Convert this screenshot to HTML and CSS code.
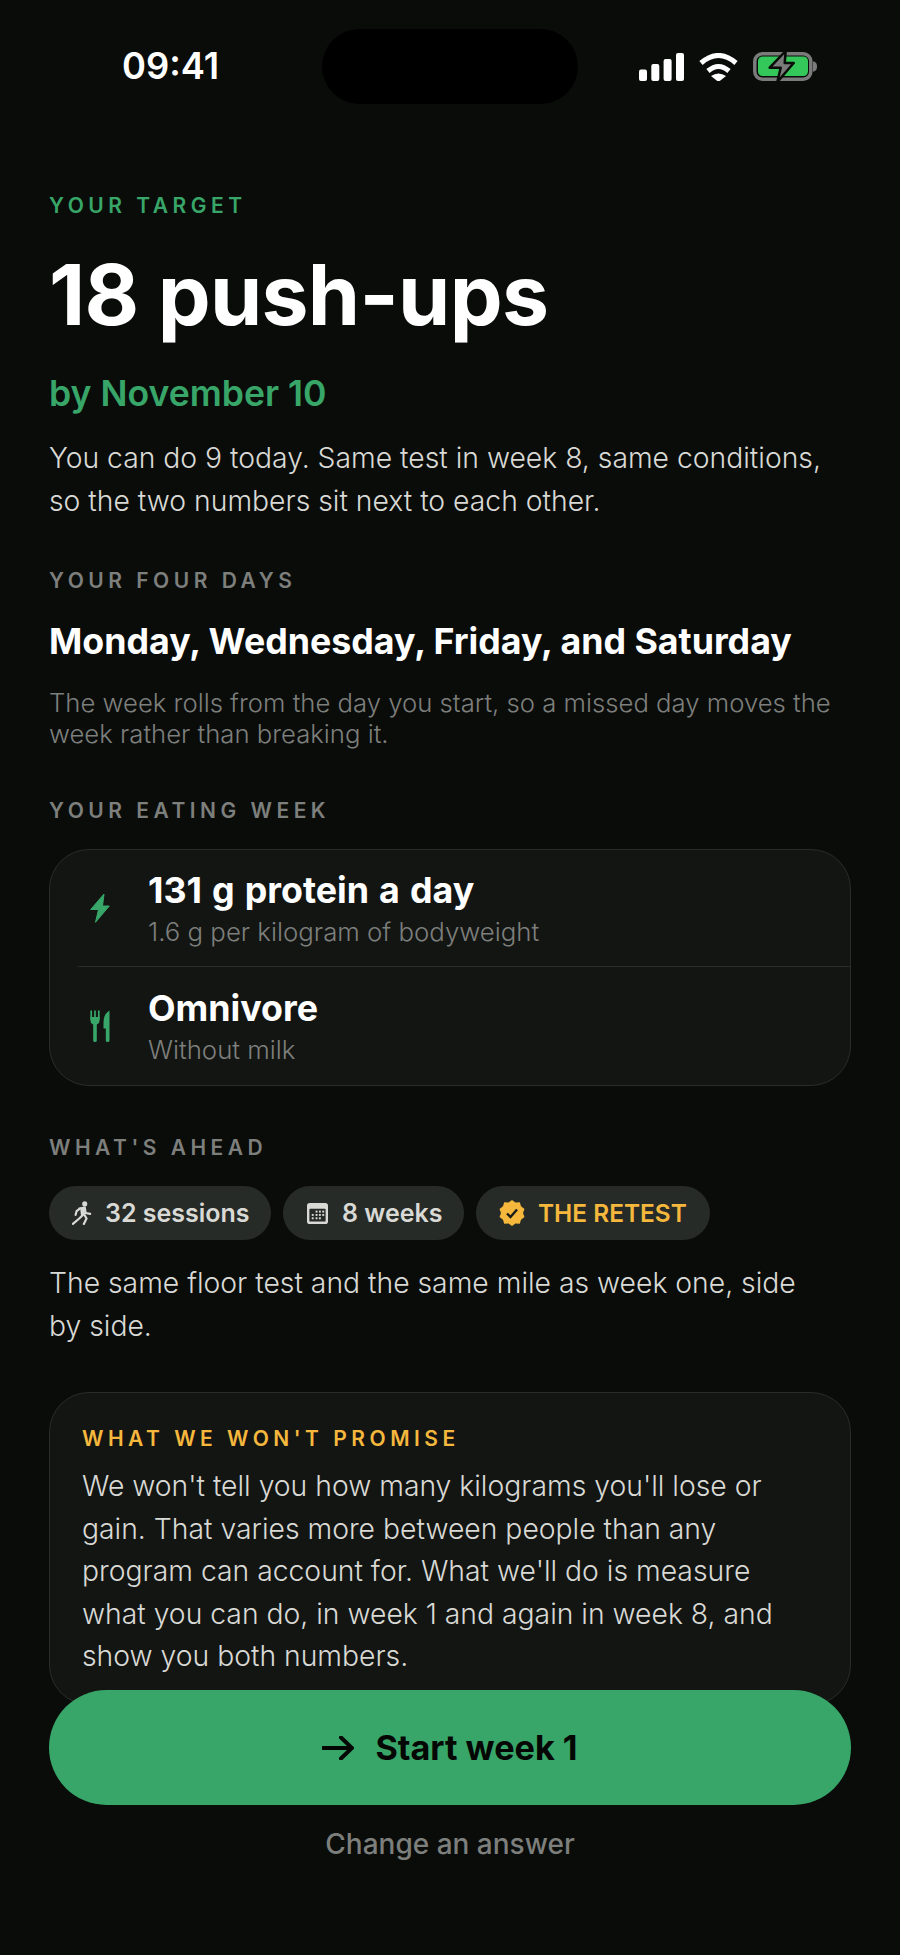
FILE: index.html
```html
<!DOCTYPE html>
<html lang="en">
<head>
<meta charset="utf-8">
<title>Your target</title>
<link rel="stylesheet" href="styles.css">
</head>
<body>
<main class="screen">
  <header class="status">
    <span class="time">09:41</span>
    <div class="island"></div>
    <div class="status-icons">
      <svg width="45" height="28" viewBox="0 0 45 28"><g fill="#fff"><rect x="0" y="16.500" width="8" height="11.500" rx="2"/><rect x="12.300" y="11" width="8" height="17" rx="2"/><rect x="24.600" y="6" width="8" height="22" rx="2"/><rect x="37" y="0" width="8" height="28" rx="2"/></g></svg>
      <svg width="39" height="28" viewBox="0 0 39 28"><g fill="none" stroke="#fff" stroke-width="5"><path d="M2 10 Q19.500 -5 37 10"/><path d="M9 18 Q19.500 9 30 18"/></g><path d="M12 23 Q19.500 18 27 23 L19.500 29Z" fill="#fff"/></svg>
      <svg width="64" height="31" viewBox="0 0 64 31"><rect x="1.800" y="2.800" width="56" height="25.500" rx="7.500" fill="none" stroke="#7b7b7b" stroke-width="3.500"/><rect x="5" y="5.500" width="50" height="19.500" rx="4.500" fill="#34c759"/><path d="M60 10.500 C63 10.500 64 13 64 15.500 C64 18 63 20.500 60 20.500Z" fill="#7b7b7b"/><path d="M32.700 0 L16.700 16.700 H27.700 L24.300 31 L40.700 12 H31.700Z" fill="#7b7b7b" stroke="#0a0c0a" stroke-width="2.500" stroke-linejoin="round"/></svg>
    </div>
  </header>

  <div class="content">
    <section class="target">
      <p class="label label-green">YOUR TARGET</p>
      <h1>18 push-ups</h1>
      <p class="by">by November 10</p>
      <p class="body">You can do 9 today. Same test in week 8, same conditions, so the two numbers sit next to each other.</p>
    </section>

    <section class="days">
      <p class="label">YOUR FOUR DAYS</p>
      <h2>Monday, Wednesday, Friday, and Saturday</h2>
      <p class="note">The week rolls from the day you start, so a missed day moves the week rather than breaking it.</p>
    </section>

    <section class="eating">
      <p class="label">YOUR EATING WEEK</p>
      <div class="card rows">
        <div class="row">
          <svg class="row-icon" width="20" height="30" viewBox="0 0 20 30"><path d="M14 1 L0.700 16.500 H8.500 L5.500 29.300 L19.300 13 H12.500Z" fill="#38a668" stroke="#38a668" stroke-width="1" stroke-linejoin="round"/></svg>
          <div><p class="row-title">131 g protein a day</p><p class="row-sub">1.6 g per kilogram of bodyweight</p></div>
        </div>
        <div class="row row-last">
          <svg class="row-icon" width="20" height="32" viewBox="0 0 20 32"><path d="M1.200 1 V9 M5 1 V9 M8.800 1 V9" stroke="#38a668" stroke-width="1.700" stroke-linecap="round" fill="none"/><path d="M0.400 7 H9.600 V10 Q9.600 13.500 6.800 14.500 V30.500 Q6.800 32 5 32 Q3.200 32 3.200 30.500 V14.500 Q0.400 13.500 0.400 10Z" fill="#38a668"/><path d="M19.500 0.500 Q13.500 4 13.500 12.500 V18.500 H15.800 V30.500 Q15.800 32 17.600 32 Q19.500 32 19.500 30.500Z" fill="#38a668"/></svg>
          <div><p class="row-title">Omnivore</p><p class="row-sub">Without milk</p></div>
        </div>
      </div>
    </section>

    <section class="ahead">
      <p class="label">WHAT'S AHEAD</p>
      <div class="chips">
        <span class="chip">
          <svg width="20" height="24" viewBox="1 0 22 26"><circle cx="15" cy="3" r="2.800" fill="#d9d9d5"/><path d="M9 8 L15 7 L16 13 L21 14 M10 8 L6 11 L5 15 M14 14 L17 19 L14 25 M14 14 L9 19 L2 25" fill="none" stroke="#d9d9d5" stroke-width="2.400" stroke-linecap="round" stroke-linejoin="round"/><path d="M10 8 L15 7 L15 15 L11 17Z" fill="#d9d9d5"/></svg>
          32 sessions
        </span>
        <span class="chip">
          <svg width="23" height="21" viewBox="0.500 0 23 22"><rect x="1" y="0" width="22" height="22" rx="3" fill="#d9d9d5"/><rect x="3.500" y="6" width="17" height="13.500" rx="1" fill="#272b27"/><g fill="#d9d9d5"><rect x="10" y="8" width="2" height="2"/><rect x="13.500" y="8" width="2" height="2"/><rect x="17" y="8" width="2" height="2"/><rect x="6" y="11.500" width="2" height="2"/><rect x="10" y="11.500" width="2" height="2"/><rect x="13.500" y="11.500" width="2" height="2"/><rect x="17" y="11.500" width="2" height="2"/><rect x="6" y="15" width="2" height="2"/><rect x="10" y="15" width="2" height="2"/><rect x="13.500" y="15" width="2" height="2"/></g></svg>
          8 weeks
        </span>
        <span class="chip chip-gold">
          <svg width="26" height="26" viewBox="0 0 26 26"><path d="M13 0 L16.500 2.500 L20.800 2.200 L22 6.300 L25.500 9 L24 13 L25.500 17 L22 19.700 L20.800 23.800 L16.500 23.500 L13 26 L9.500 23.500 L5.200 23.800 L4 19.700 L0.500 17 L2 13 L0.500 9 L4 6.300 L5.200 2.200 L9.500 2.500Z" fill="#f5b83d"/><path d="M8 13.500 L11.500 17 L18 9.500" fill="none" stroke="#1a1c1a" stroke-width="2.400"/></svg>
          THE RETEST
        </span>
      </div>
      <p class="body">The same floor test and the same mile as week one, side<br>by side.</p>
    </section>

    <section class="card promise">
      <p class="label label-gold">WHAT WE WON'T PROMISE</p>
      <p class="body">We won't tell you how many kilograms you'll lose or gain. That varies more between people than any program can account for. What we'll do is measure what you can do, in week 1 and again in week 8, and show you both numbers.</p>
    </section>
  </div>

  <footer class="actions">
    <button class="cta" type="button">
      <svg width="32" height="24" viewBox="0 0 32 24"><path d="M1 12 H30 M19 1.500 L30 12 L19 22.500" fill="none" stroke="#050705" stroke-width="4" stroke-linecap="round"/></svg>
      Start week 1
    </button>
    <p class="change">Change an answer</p>
  </footer>
</main>
</body>
</html>
```

FILE: styles.css
```css
* { box-sizing: border-box; margin: 0; padding: 0; }
html, body { background: #0a0c0a; }
body { font-family: Inter, "Liberation Sans", sans-serif; color: #fff; }
.screen { position: relative; width: 900px; height: 1955px; overflow: hidden; }

.status { height: 104px; position: relative; }
.time { position: absolute; left: 122px; top: 44px; font: 600 36.300px/44px Inter, sans-serif; }
.island { position: absolute; left: 322px; top: 29px; width: 256px; height: 75px; border-radius: 38px; background: #000; }
.status-icons { position: absolute; left: 639px; top: 51px; display: flex; align-items: center; gap: 15px; }

.content { padding: 89px 49px 0; }
.label { font-size: 21px; line-height: 26px; font-weight: 600; letter-spacing: 4.500px; color: #7d7f7c; }
.label-green { color: #38a668; }
.label-gold { color: #f5b83d; }
h1 { font-size: 84px; line-height: 100px; font-weight: 700; margin-top: 26px; letter-spacing: -.7px; }
.by { font-size: 35.600px; line-height: 44px; font-weight: 600; color: #38a668; margin-top: 27px; }
.body { font-size: 28.300px; line-height: 42.500px; font-weight: 350; color: #d9d9d5; }
.target .body { margin-top: 21px; }

.days { margin-top: 46px; }
h2 { font-size: 35.750px; line-height: 44px; font-weight: 700; margin-top: 25px; }
.note { font-size: 25.700px; line-height: 31px; font-weight: 350; color: #7d7f7c; margin-top: 23.500px; }

.eating { margin-top: 49.500px; }
.card { background: #131513; border: 1.500px solid #2a2c2a; border-radius: 40px; }
.rows { margin-top: 25px; width: 802px; }
.row { display: flex; align-items: center; margin-left: 28px; height: 117px; border-bottom: 1.500px solid #2a2c2a; }
.row-last { border-bottom: 0; height: 118px; }
.row-icon { margin: 0 38px 0 12px; flex: none; }
.row-title { font-size: 35.800px; line-height: 44px; font-weight: 700; word-spacing: 1.600px; }
.row-sub { font-size: 25.800px; line-height: 32px; font-weight: 350; color: #7d7f7c; margin-top: 4.500px; }

.ahead { margin-top: 49px; }
.chips { display: flex; gap: 12.500px; margin-top: 25px; }
.chip { display: flex; align-items: center; gap: 13px; height: 54px; padding: 0 21px 0 23px; border-radius: 27px; background: #272b27; font-size: 25px; font-weight: 600; color: #d9d9d5; }
.chip-gold { color: #f5b83d; font-size: 24.400px; padding-right: 23px; }
.ahead .body { margin-top: 22px; }

.promise { margin-top: 45px; width: 802px; height: 313px; padding: 33px 32px 0; }
.promise .body { margin-top: 13px; }

.actions { position: absolute; left: 49px; top: 1690px; width: 802px; display: flex; flex-direction: column; align-items: center; }
.cta { width: 100%; height: 115px; border: 0; border-radius: 58px; background: #38a668; color: #050705; font: 700 34.200px/44px Inter, sans-serif; display: flex; align-items: center; justify-content: center; gap: 21px; }
.change { margin-top: 21px; font-size: 28px; line-height: 36px; font-weight: 500; color: #7d7f7c; }
```
